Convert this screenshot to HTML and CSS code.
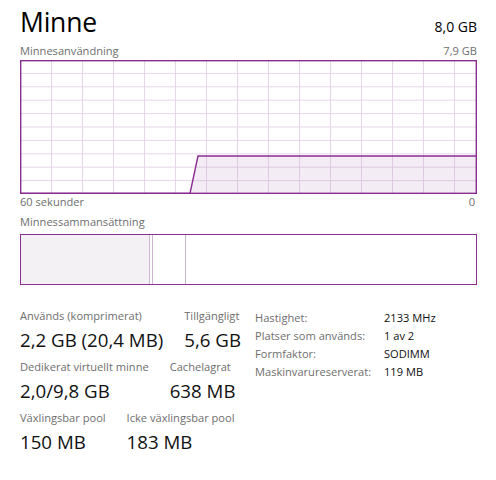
FILE: index.html
```html
<!DOCTYPE html>
<html lang="sv">
<head>
<meta charset="utf-8">
<title>Minne</title>
<link rel="stylesheet" href="styles.css">
</head>
<body>
<div class="page">
  <div class="header">
    <div class="title">Minne</div>
    <div class="total">8,0 GB</div>
  </div>
  <div class="caption-row top-cap">
    <span>Minnesanvändning</span>
    <span>7,9 GB</span>
  </div>
  <svg class="graph" width="457" height="134" viewBox="0 0 457 134">
    <rect x="0" y="0" width="457" height="134" fill="#ffffff"/>
    <g stroke="#e6d7e8" stroke-width="1">
      <line x1="0" y1="13.4" x2="457" y2="13.4"/>
      <line x1="0" y1="26.8" x2="457" y2="26.8"/>
      <line x1="0" y1="40.2" x2="457" y2="40.2"/>
      <line x1="0" y1="53.6" x2="457" y2="53.6"/>
      <line x1="0" y1="67" x2="457" y2="67"/>
      <line x1="0" y1="80.4" x2="457" y2="80.4"/>
      <line x1="0" y1="93.8" x2="457" y2="93.8"/>
      <line x1="0" y1="107.2" x2="457" y2="107.2"/>
      <line x1="0" y1="120.6" x2="457" y2="120.6"/>
      <line x1="31.5" y1="0" x2="31.5" y2="134"/>
      <line x1="62.5" y1="0" x2="62.5" y2="134"/>
      <line x1="93.5" y1="0" x2="93.5" y2="134"/>
      <line x1="124.5" y1="0" x2="124.5" y2="134"/>
      <line x1="155.5" y1="0" x2="155.5" y2="134"/>
      <line x1="186.5" y1="0" x2="186.5" y2="134"/>
      <line x1="217.5" y1="0" x2="217.5" y2="134"/>
      <line x1="248.5" y1="0" x2="248.5" y2="134"/>
      <line x1="279.5" y1="0" x2="279.5" y2="134"/>
      <line x1="310.5" y1="0" x2="310.5" y2="134"/>
      <line x1="341.5" y1="0" x2="341.5" y2="134"/>
      <line x1="372.5" y1="0" x2="372.5" y2="134"/>
      <line x1="403.5" y1="0" x2="403.5" y2="134"/>
      <line x1="434.5" y1="0" x2="434.5" y2="134"/>
    </g>
    <polygon points="170,134 178,96 457,96 457,134" fill="#b48ab9" fill-opacity="0.16"/>
    <polyline points="0,133.5 170,133.5 178,96 457,96" fill="none" stroke="#8a2d90" stroke-width="1.4"/>
    <rect x="0.7" y="0.7" width="455.6" height="132.6" fill="none" stroke="#8a2d90" stroke-width="1.4"/>
  </svg>
  <div class="caption-row bottom-cap">
    <span>60 sekunder</span>
    <span>0</span>
  </div>
  <div class="caption-row comp-cap">
    <span>Minnessammansättning</span>
  </div>
  <div class="composition">
    <div class="seg seg-use"></div>
    <div class="seg seg-mod"></div>
    <div class="seg seg-standby"></div>
    <div class="seg seg-free"></div>
  </div>
  <div class="details">
    <div class="stats">
      <div class="stat-row">
        <div class="stat"><div class="label">Används (komprimerat)</div><div class="value">2,2 GB (20,4 MB)</div></div>
        <div class="stat"><div class="label">Tillgängligt</div><div class="value">5,6 GB</div></div>
      </div>
      <div class="stat-row">
        <div class="stat"><div class="label">Dedikerat virtuellt minne</div><div class="value">2,0/9,8 GB</div></div>
        <div class="stat"><div class="label">Cachelagrat</div><div class="value">638 MB</div></div>
      </div>
      <div class="stat-row">
        <div class="stat"><div class="label">Växlingsbar pool</div><div class="value">150 MB</div></div>
        <div class="stat"><div class="label">Icke växlingsbar pool</div><div class="value">183 MB</div></div>
      </div>
    </div>
    <div class="props">
      <div class="prop"><span class="pk">Hastighet:</span><span class="pv">2133 MHz</span></div>
      <div class="prop"><span class="pk">Platser som används:</span><span class="pv">1 av 2</span></div>
      <div class="prop"><span class="pk">Formfaktor:</span><span class="pv">SODIMM</span></div>
      <div class="prop"><span class="pk">Maskinvarureserverat:</span><span class="pv">119 MB</span></div>
    </div>
  </div>
</div>
</body>
</html>
```
FILE: styles.css
```css
html, body {
  margin: 0;
  padding: 0;
  background: #ffffff;
}
body {
  font-family: "Open Sans", "Noto Sans", "DejaVu Sans", sans-serif;
  color: #000000;
}
.page {
  padding: 0 19px 0 20px;
  width: 457px;
}
.header {
  display: flex;
  justify-content: space-between;
  align-items: baseline;
  padding-top: 4px;
  height: 36px;
}
.title {
  font-size: 26.5px;
  line-height: 36px;
  letter-spacing: -0.2px;
}
.total {
  font-size: 14px;
  line-height: 36px;
}
.caption-row {
  display: flex;
  justify-content: space-between;
  font-size: 11.1px;
  line-height: 14px;
  color: #6e6e6e;
}
.top-cap {
  padding-top: 4px;
}
.graph {
  display: block;
  margin-top: 2px;
}
.bottom-cap {
  margin-top: 1px;
  padding-right: 2px;
}
.comp-cap {
  margin-top: 6px;
}
.composition {
  margin-top: 5px;
  height: 51px;
  box-sizing: border-box;
  border: 1.4px solid #8a2d90;
  display: flex;
}
.seg {
  height: 100%;
}
.seg-use {
  width: 128px;
  background: #f4f1f4;
  border-right: 1px solid #cdb6d0;
}
.seg-mod {
  width: 2px;
  background: #ffffff;
  border-right: 1px solid #cdb6d0;
}
.seg-standby {
  width: 32px;
  border-right: 1px solid #c4b8c6;
}
.seg-free {
  flex: 1;
}
.details {
  display: flex;
  margin-top: 24px;
}
.stats {
  width: 235px;
  flex: 0 0 235px;
  display: flex;
  flex-direction: column;
  gap: 8px;
}
.stat-row {
  display: flex;
  gap: 21px;
  white-space: nowrap;
}
.label {
  font-size: 11.1px;
  line-height: 14px;
  color: #6e6e6e;
  margin-bottom: 4px;
}
.value {
  font-size: 18.7px;
  line-height: 25px;
  color: #111111;
}
.props {
  display: flex;
  flex-direction: column;
  margin-top: 0px;
}
.prop {
  display: flex;
  font-size: 11.1px;
  line-height: 18px;
  white-space: nowrap;
}
.pk {
  width: 129px;
  color: #6e6e6e;
}
.pv {
  color: #111111;
}
```
